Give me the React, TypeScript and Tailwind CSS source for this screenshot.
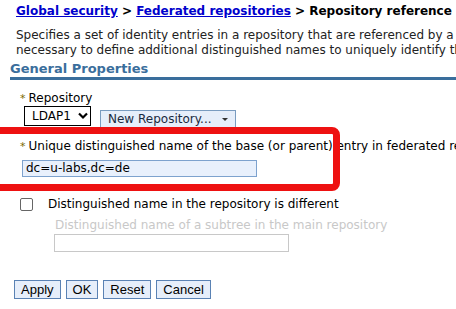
const font = { fontFamily: '"DejaVu Sans", Verdana, sans-serif' };

const Star = () => <span className="text-[#7a6a00] mr-[3px] text-[11px]">*</span>;

export default function App() {
  return (
    <div className="relative w-[456px] h-[309px] overflow-hidden bg-white text-[#000] whitespace-nowrap" style={font}>
      {/* breadcrumb */}
      <div className="pl-[16px] pt-[3px] text-[12px] font-bold leading-[16px]">
        <a className="text-[#0000cc] underline">Global security</a>
        <span> &gt; </span>
        <a className="text-[#0000cc] underline">Federated repositories</a>
        <span> &gt; Repository reference</span>
      </div>
      <div className="pl-[16px] pt-[9px] text-[12px] leading-[15px] text-[#222]">
        <div>Specifies a set of identity entries in a repository that are referenced by a base entry</div>
        <div>necessary to define additional distinguished names to uniquely identify the same entry</div>
      </div>
      <div className="ml-[10px] mt-[3px] border-b-[3px] border-[#3a6e9c] text-[13px] font-bold leading-[16px] text-[#3a6e9c]">
        General Properties
      </div>

      {/* repository */}
      <div className="pl-[20px] pt-[11px] text-[12px] leading-[14px]">
        <Star />Repository
      </div>
      <div className="flex items-start pl-[24px] gap-[9px]">
        <div className="flex items-center h-[20px] w-[67px] border border-black pl-[7px] gap-[7px] text-[12px]">
          <span>LDAP1</span>
          <svg width="10" height="8" viewBox="0 0 10 8"><path d="M1 1.5 L5 5.5 L9 1.5" fill="none" stroke="#000" strokeWidth="2.2" /></svg>
        </div>
        <div className="mt-[4px] flex items-center h-[18px] px-[7px] gap-[10px] border border-[#7a9cc0] bg-[#e6eefa] text-[12px] text-[#1a2a40]">
          <span>New Repository...</span>
          <span className="border-x-[3px] border-t-[3px] border-x-transparent border-t-[#333]"></span>
        </div>
      </div>

      {/* unique dn */}
      <div className="pl-[20px] pt-[11px] text-[12px] leading-[14px]">
        <Star />Unique distinguished name of the base (or parent) entry in federated repositories
      </div>
      <div className="pl-[22px] pt-[6px]">
        <div className="w-[235px] h-[17px] border border-[#7da2ce] bg-[#e8f0fc] text-[12px] leading-[15px] px-[3px]">dc=u-labs,dc=de</div>
      </div>

      {/* checkbox */}
      <div className="flex items-center pl-[20px] pt-[20px] gap-[15px] text-[12px] leading-[14px]">
        <span className="w-[13px] h-[13px] border border-[#666] rounded-[2px] bg-white"></span>
        <span>Distinguished name in the repository is different</span>
      </div>
      <div className="pl-[55px] pt-[7px] text-[12px] leading-[14px] text-[#c8c8c8]">
        Distinguished name of a subtree in the main repository
      </div>
      <div className="pl-[54px] pt-[2px]">
        <div className="w-[235px] h-[18px] border border-[#c8c8c8] bg-white"></div>
      </div>

      {/* buttons */}
      <div className="flex pl-[14px] pt-[28px] gap-[5px] text-[13px] leading-[16px]" style={{ fontFamily: '"Liberation Sans", Arial, sans-serif' }}>
        {["Apply", "OK", "Reset", "Cancel"].map((b) => (
          <div key={b} className="h-[19px] px-[6px] border border-[#5a82b4] bg-[#e6eefa] flex items-center">{b}</div>
        ))}
      </div>

      {/* red annotation */}
      <div className="absolute left-[-8px] top-[127px] w-[348px] h-[64px] border-[7px] border-[#ee1111] rounded-[8px]"></div>
    </div>
  );
}
